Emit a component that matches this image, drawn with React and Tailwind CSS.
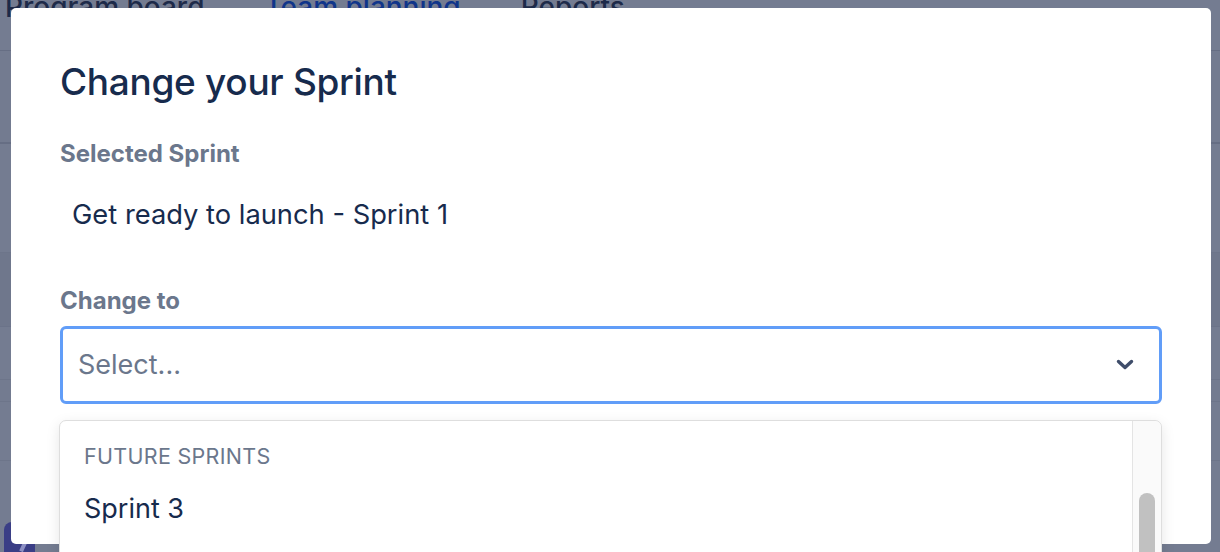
import React from "react";

function Chevron() {
  return (
    <svg width="18" height="12" viewBox="0 0 18 12" className="block">
      <path d="M2.5 2.5 L9 8.5 L15.5 2.5" fill="none" stroke="#3f4d6a" strokeWidth="3.4" strokeLinecap="round" strokeLinejoin="round" />
    </svg>
  );
}

export default function App() {
  const font = { fontFamily: "Inter, 'Noto Sans', sans-serif" };
  return (
    <div className="relative w-[1220px] h-[552px] overflow-hidden bg-[#747c91]" style={font}>
      {/* background page (dimmed) */}
      <div className="flex flex-col">
        <div className="h-[65px] border-b border-[#666e84] flex items-start gap-[60px] pl-[5px] -mt-[14px] text-[28px] font-medium text-[#1d2a49]">
          <span>Program board</span>
          <span className="text-[#10358a]">Team planning</span>
          <span>Reports</span>
        </div>
        <div className="h-[93px] border-b-2 border-[#666e84] bg-[#737b90]" />
        <div className="h-[109px] border-b border-[#6d758a] bg-[#747c91]" />
        <div className="h-[74px] border-b border-[#6b7389] bg-[#6f778c]" />
        <div className="h-[53px] border-b border-[#6d758a] bg-[#747c91]" />
        <div className="h-[22px] border-b border-[#6d758a] bg-[#737b90]" />
        <div className="h-[59px] border-b border-[#6d758a] bg-[#747c91]" />
        <div className="h-[100px] pl-[4px] pt-[61px] bg-[#747c91]">
          <div className="relative w-[31px] h-[40px] rounded-tl-[8px] rounded-tr-[3px] bg-[#3a3e86] overflow-hidden">
            <div className="absolute left-[18px] top-[16px] w-[4px] h-[14px] bg-[#8d90c4] rotate-[25deg]" />
          </div>
        </div>
      </div>

      {/* modal */}
      <div className="absolute left-[11px] top-[8px] w-[1200px] h-[536px] bg-white rounded-[5px]">
        <div className="pl-[49px] pr-[49px] pt-[52px]">
          <h1 className="text-[37px] leading-[44px] font-medium text-[#172b4d] tracking-[-0.3px]">Change your Sprint</h1>
          <div className="mt-[36px] text-[24px] leading-[28px] font-bold text-[#6b778c]">Selected Sprint</div>
          <div className="mt-[29px] pl-[12px] text-[27.3px] leading-[36px] text-[#172b4d]">Get ready to launch - Sprint 1</div>
          <div className="mt-[54px] text-[24px] leading-[28px] font-bold text-[#6b778c]">Change to</div>
          <div className="relative mt-[11px]">
            <div className="h-[78px] border-[3px] border-[#619df8] rounded-[6px] flex items-center justify-between pl-[15px] pr-[25px]">
              <span className="text-[27px] text-[#6b778c]">Select...</span>
              <Chevron />
            </div>
            {/* dropdown menu */}
            <div className="absolute left-[-1px] right-0 top-[94px] h-[160px] bg-white border border-[#dedede] rounded-[7px] shadow-[0_4px_14px_rgba(0,0,0,0.10)] flex">
              <div className="flex-1 pt-[22px] pl-[24px]">
                <div className="text-[21.5px] leading-[26px] text-[#6b778c] tracking-[0.3px]">FUTURE SPRINTS</div>
                <div className="mt-[23px] text-[27px] leading-[34px] text-[#172b4d]">Sprint 3</div>
              </div>
              <div className="w-[29px] border-l border-[#e4e4e4] bg-[#fafafa] rounded-tr-[7px] pt-[72px] pl-[6px]">
                <div className="w-[16px] h-[100px] rounded-full bg-[#c1c1c1]" />
              </div>
            </div>
          </div>
        </div>
      </div>
    </div>
  );
}
